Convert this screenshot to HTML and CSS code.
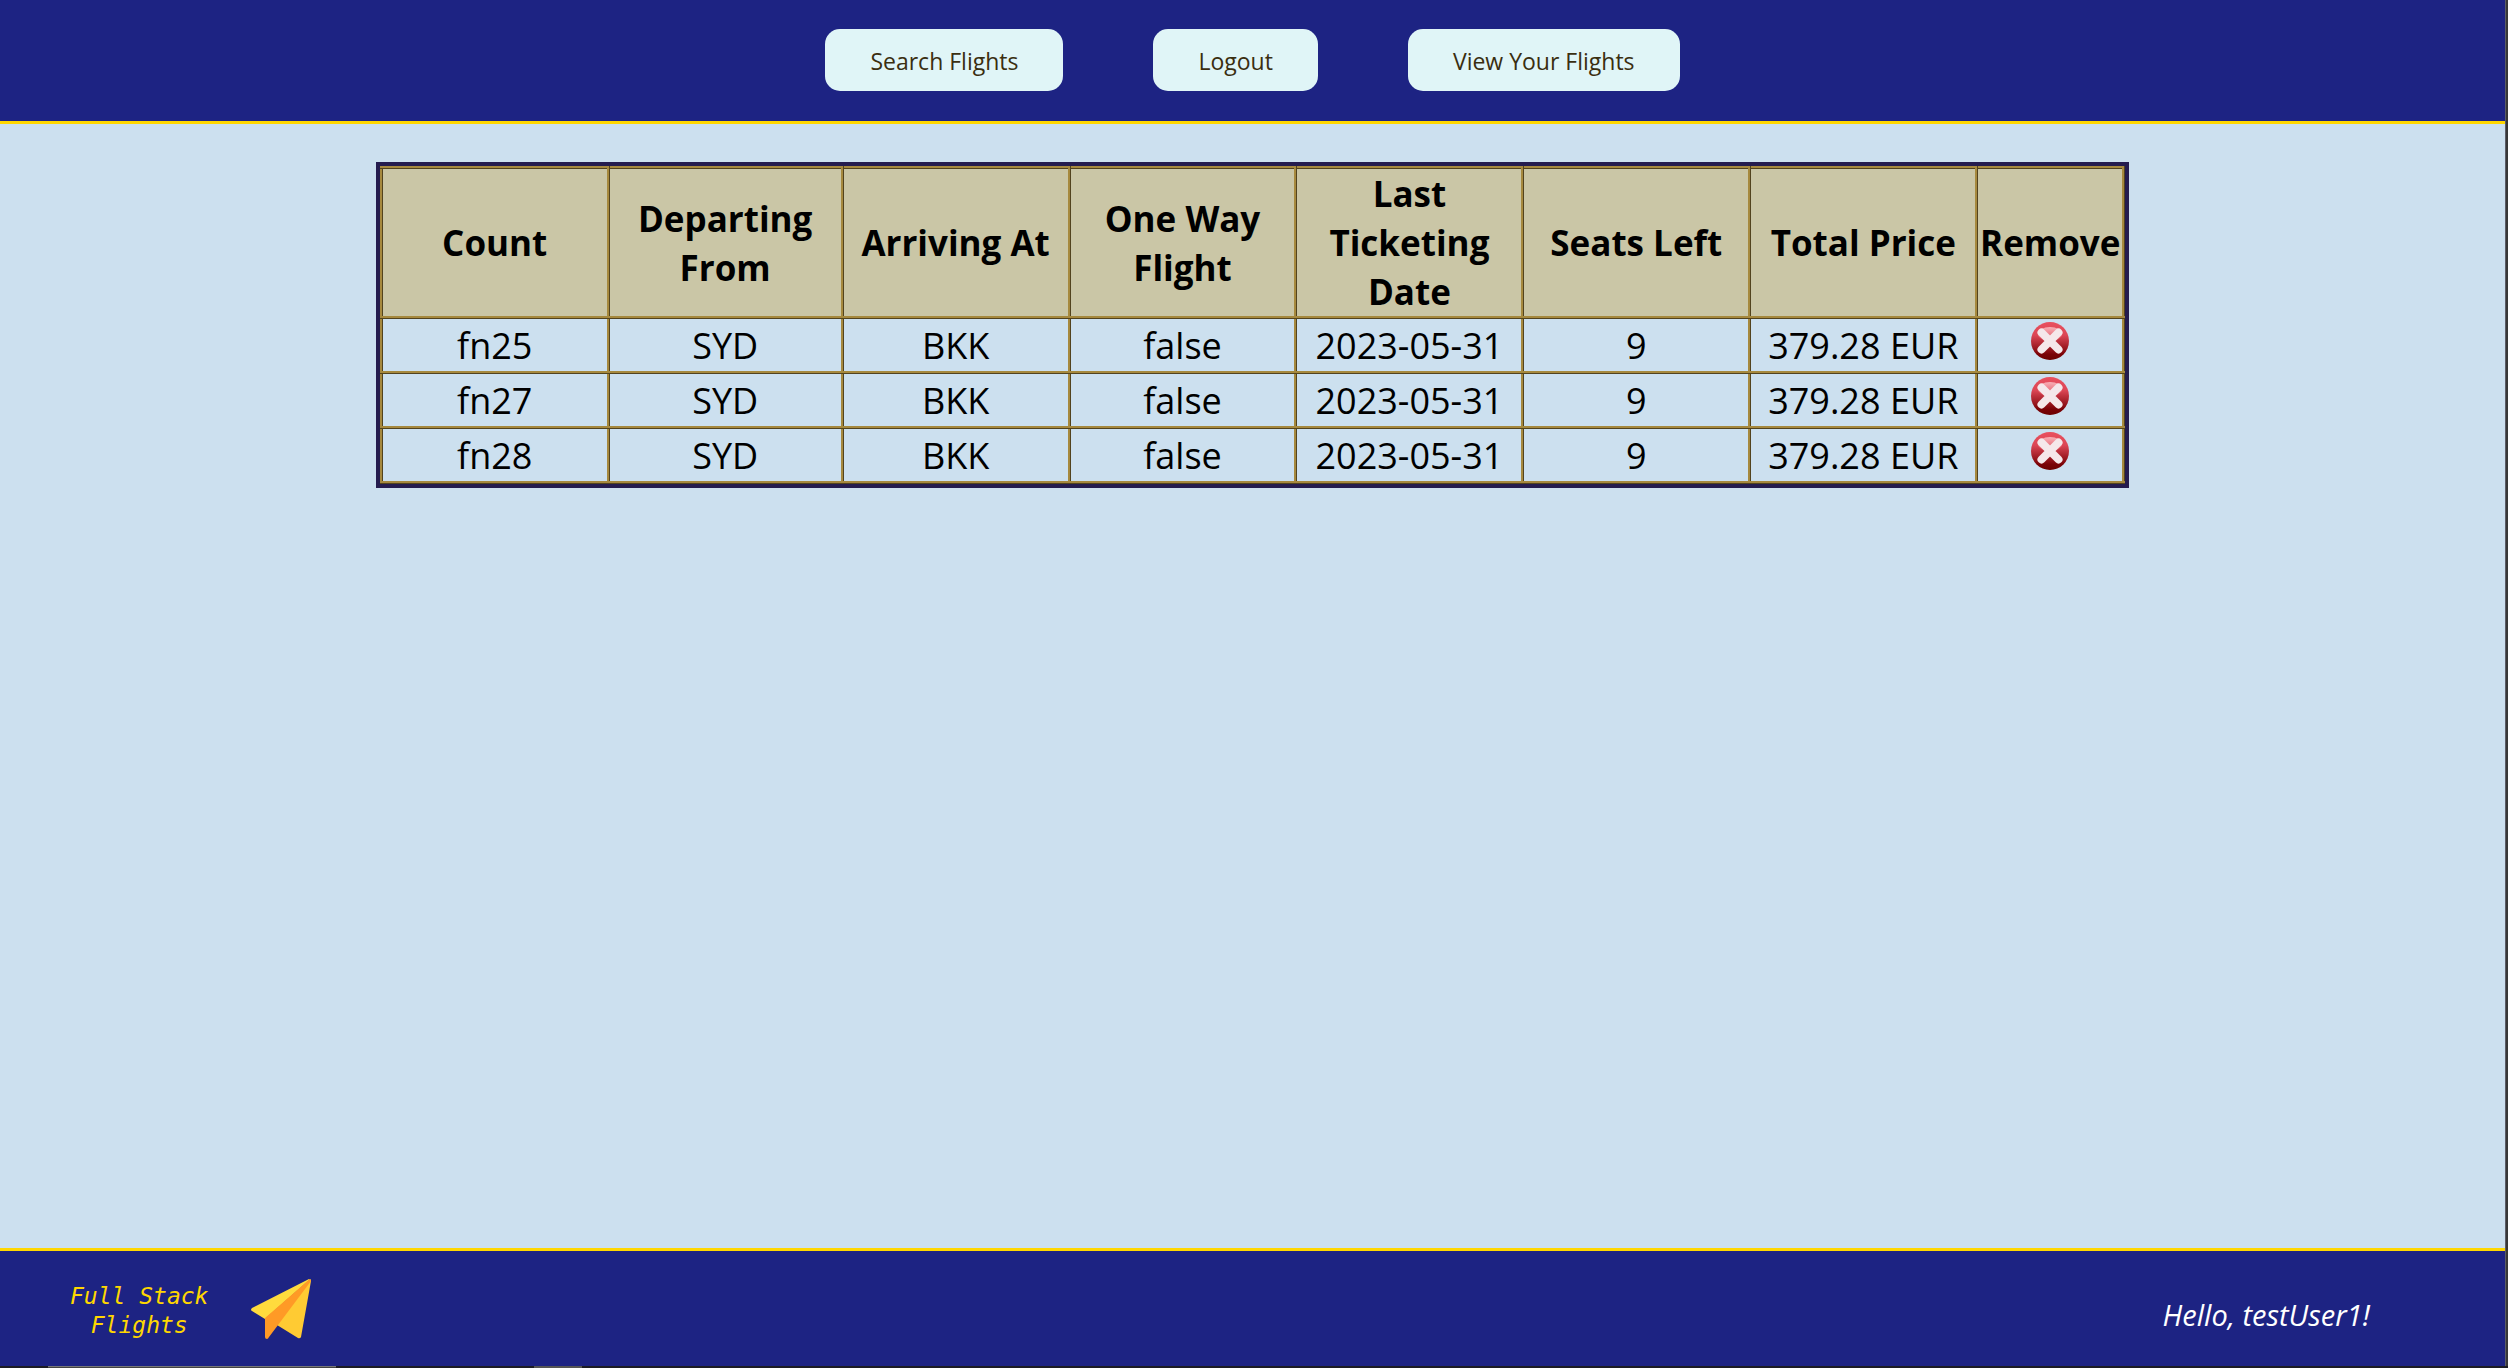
FILE: index.html
```html
<!DOCTYPE html>
<html lang="en">
<head>
<meta charset="utf-8">
<title>Full Stack Flights</title>
<link rel="stylesheet" href="styles.css">
</head>
<body>
<svg class="sprite" aria-hidden="true">
  <defs>
    <linearGradient id="red" x1="0" y1="0" x2="0" y2="1">
      <stop offset="0" stop-color="#e9505e"/>
      <stop offset=".35" stop-color="#dc4655"/>
      <stop offset=".85" stop-color="#7a0206"/>
      <stop offset="1" stop-color="#6c0000"/>
    </linearGradient>
    <linearGradient id="shine" x1="0" y1="0" x2="0" y2="1">
      <stop offset="0" stop-color="#f8b0b6"/>
      <stop offset="1" stop-color="#e14c5a"/>
    </linearGradient>
  </defs>
  <symbol id="cross" viewBox="0 0 38 38">
    <circle cx="19" cy="19" r="19" fill="url(#red)"/>
    <ellipse cx="19" cy="12" rx="12" ry="7" fill="url(#shine)"/>
    <path d="M10.500 10.500 27.500 27.500M27.500 10.500 10.500 27.500" stroke="#f5e8ea" stroke-width="8" stroke-linecap="round"/>
  </symbol>
</svg>
<div class="window">
  <div class="page">
    <header class="header">
      <nav class="nav">
        <button type="button" class="nav-button">Search Flights</button>
        <button type="button" class="nav-button">Logout</button>
        <button type="button" class="nav-button">View Your Flights</button>
      </nav>
    </header>
    <main class="main">
      <div class="table-frame">
        <table class="flights">
          <colgroup>
            <col><col class="col-from"><col><col><col><col><col><col class="col-remove">
          </colgroup>
          <thead>
            <tr><th>Count</th><th>Departing From</th><th>Arriving At</th><th>One Way Flight</th><th>Last Ticketing Date</th><th>Seats Left</th><th>Total Price</th><th>Remove</th></tr>
          </thead>
          <tbody>
            <tr><td>fn25</td><td>SYD</td><td>BKK</td><td>false</td><td>2023-05-31</td><td>9</td><td>379.28 EUR</td><td><button type="button" class="remove" aria-label="Remove fn25"><svg class="cross"><use href="#cross"/></svg></button></td></tr>
            <tr><td>fn27</td><td>SYD</td><td>BKK</td><td>false</td><td>2023-05-31</td><td>9</td><td>379.28 EUR</td><td><button type="button" class="remove" aria-label="Remove fn27"><svg class="cross"><use href="#cross"/></svg></button></td></tr>
            <tr><td>fn28</td><td>SYD</td><td>BKK</td><td>false</td><td>2023-05-31</td><td>9</td><td>379.28 EUR</td><td><button type="button" class="remove" aria-label="Remove fn28"><svg class="cross"><use href="#cross"/></svg></button></td></tr>
          </tbody>
        </table>
      </div>
    </main>
    <footer class="footer">
      <div class="brand">
        <p class="brand-name">Full Stack<br>Flights</p>
        <svg class="plane" viewBox="0 0 60 60" aria-hidden="true">
          <path d="M58 0 1 29Q-1 31 1 32L14 40 58 1Z" fill="#ffdb3d"/>
          <path d="M59 0Q60 0 60 2L50 58Q49 60 47 59L26 46 14 40Z" fill="#ffcb33"/>
          <path d="M59 0 14 39V58Q14 60 16 60 17 60 18 58L27 46 60 2Z" fill="#ff9a26"/>
        </svg>
      </div>
      <p class="greeting">Hello, testUser1!</p>
    </footer>
  </div>
  <div class="edge"></div>
</div>
<div class="taskbar"><span class="task-search"></span><span class="task-item"></span></div>
</body>
</html>
```

FILE: styles.css
```css
* { box-sizing: border-box; }

body {
  margin: 0;
  min-height: 100vh;
  display: flex;
  flex-direction: column;
  background: #cce0ef;
  color: #000;
  font-family: "Open Sans", "Noto Sans", sans-serif;
}

p { margin: 0; }

.sprite { position: absolute; width: 0; height: 0; }

.window { flex: 1; display: flex; }

.page {
  flex: 1;
  display: flex;
  flex-direction: column;
}

.edge {
  width: 3px;
  background: #383838;
  border-left: 1px solid #5c5c66;
}

.header {
  padding: 29px 0 30px;
  background: #1d2383;
  border-bottom: 3px solid #ffd700;
}

.nav {
  display: flex;
  justify-content: center;
  gap: 90px;
}

.nav-button {
  height: 62px;
  padding: 2px 45px 0;
  border: 0;
  border-radius: 15px;
  background: #e0f5f7;
  color: #3a2e10;
  font: 400 23px/30px "Open Sans", "Noto Sans", sans-serif;
}

.main { flex: 1; padding-top: 38px; }

.table-frame {
  width: 70%;
  margin: 0 auto;
  border: 4px solid #241c4e;
}

.flights {
  width: 100%;
  table-layout: fixed;
  border-collapse: collapse;
  font-size: 36px;
  line-height: 49px;
  text-align: center;
}

.col-from { width: 234px; }
.col-remove { width: 147px; }

.flights th,
.flights td {
  padding: 0;
  border: 3px ridge #a6893e;
}

.flights th { background: #cac6a6; font-size: 35px; font-weight: 700; }
.flights td { height: 55px; }

.remove {
  display: block;
  margin: 0 auto 8px;
  padding: 0;
  border: 0;
  background: none;
}

.cross { display: block; width: 38px; height: 38px; }

.footer {
  display: flex;
  justify-content: space-between;
  align-items: center;
  padding: 27px 135px 26px 70px;
  background: #1d2383;
  border-top: 3px solid #ffd700;
}

.brand { display: flex; align-items: center; gap: 43px; }

.brand-name {
  padding-top: 4px;
  color: #ffd700;
  font: italic 23px/29px "DejaVu Sans Mono", monospace;
  text-align: center;
}

.plane { width: 60px; height: 60px; }

.greeting {
  padding-top: 12px;
  color: #fff;
  font-size: 29px;
  line-height: 38px;
  font-style: italic;
}

.taskbar {
  display: flex;
  height: 2px;
  padding-left: 48px;
  gap: 198px;
  background: #1c1c24;
}

.task-search { width: 288px; background: #444; border-top: 1px solid #777; }
.task-item { width: 48px; background: #555; }
```
